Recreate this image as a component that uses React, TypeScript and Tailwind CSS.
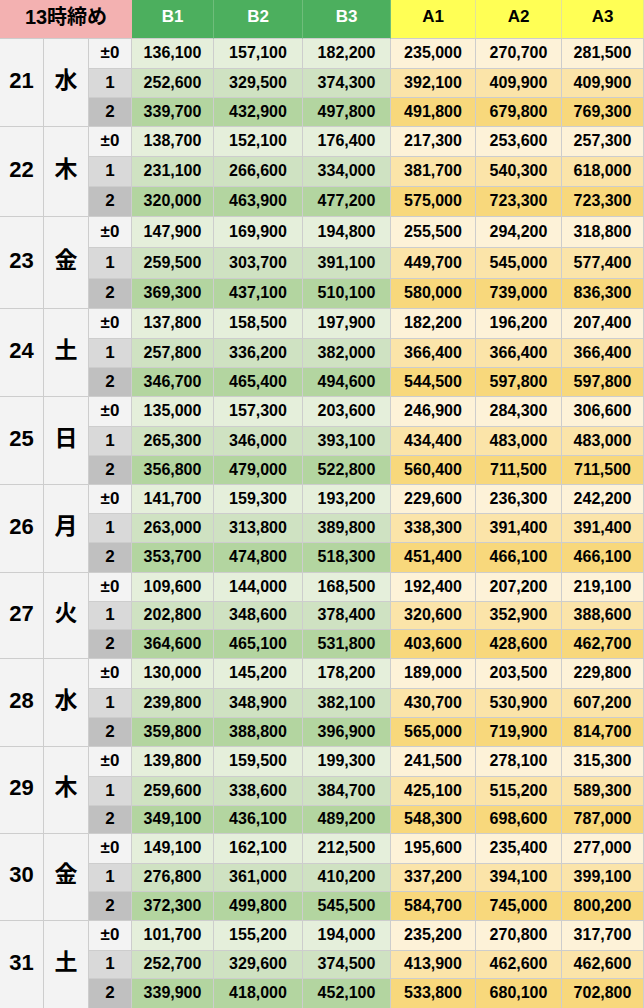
const days: { d: number; w: string; rows: string[][] }[] = [
  { d: 21, w: "水", rows: [
    ["136,100", "157,100", "182,200", "235,000", "270,700", "281,500"],
    ["252,600", "329,500", "374,300", "392,100", "409,900", "409,900"],
    ["339,700", "432,900", "497,800", "491,800", "679,800", "769,300"],
  ] },
  { d: 22, w: "木", rows: [
    ["138,700", "152,100", "176,400", "217,300", "253,600", "257,300"],
    ["231,100", "266,600", "334,000", "381,700", "540,300", "618,000"],
    ["320,000", "463,900", "477,200", "575,000", "723,300", "723,300"],
  ] },
  { d: 23, w: "金", rows: [
    ["147,900", "169,900", "194,800", "255,500", "294,200", "318,800"],
    ["259,500", "303,700", "391,100", "449,700", "545,000", "577,400"],
    ["369,300", "437,100", "510,100", "580,000", "739,000", "836,300"],
  ] },
  { d: 24, w: "土", rows: [
    ["137,800", "158,500", "197,900", "182,200", "196,200", "207,400"],
    ["257,800", "336,200", "382,000", "366,400", "366,400", "366,400"],
    ["346,700", "465,400", "494,600", "544,500", "597,800", "597,800"],
  ] },
  { d: 25, w: "日", rows: [
    ["135,000", "157,300", "203,600", "246,900", "284,300", "306,600"],
    ["265,300", "346,000", "393,100", "434,400", "483,000", "483,000"],
    ["356,800", "479,000", "522,800", "560,400", "711,500", "711,500"],
  ] },
  { d: 26, w: "月", rows: [
    ["141,700", "159,300", "193,200", "229,600", "236,300", "242,200"],
    ["263,000", "313,800", "389,800", "338,300", "391,400", "391,400"],
    ["353,700", "474,800", "518,300", "451,400", "466,100", "466,100"],
  ] },
  { d: 27, w: "火", rows: [
    ["109,600", "144,000", "168,500", "192,400", "207,200", "219,100"],
    ["202,800", "348,600", "378,400", "320,600", "352,900", "388,600"],
    ["364,600", "465,100", "531,800", "403,600", "428,600", "462,700"],
  ] },
  { d: 28, w: "水", rows: [
    ["130,000", "145,200", "178,200", "189,000", "203,500", "229,800"],
    ["239,800", "348,900", "382,100", "430,700", "530,900", "607,200"],
    ["359,800", "388,800", "396,900", "565,000", "719,900", "814,700"],
  ] },
  { d: 29, w: "木", rows: [
    ["139,800", "159,500", "199,300", "241,500", "278,100", "315,300"],
    ["259,600", "338,600", "384,700", "425,100", "515,200", "589,300"],
    ["349,100", "436,100", "489,200", "548,300", "698,600", "787,000"],
  ] },
  { d: 30, w: "金", rows: [
    ["149,100", "162,100", "212,500", "195,600", "235,400", "277,000"],
    ["276,800", "361,000", "410,200", "337,200", "394,100", "399,100"],
    ["372,300", "499,800", "545,500", "584,700", "745,000", "800,200"],
  ] },
  { d: 31, w: "土", rows: [
    ["101,700", "155,200", "194,000", "235,200", "270,800", "317,700"],
    ["252,700", "329,600", "374,500", "413,900", "462,600", "462,600"],
    ["339,900", "418,000", "452,100", "533,800", "680,100", "702,800"],
  ] },
]

const offsets = ["±0", "1", "2"]
const offsetBg = ["bg-[#f3f3f3]", "bg-[#d9d9d9]", "bg-[#c0c0c0]"]
const bBg = ["bg-[#e5efdb]", "bg-[#cfe2c2]", "bg-[#b3d5a0]"]
const aBg = ["bg-[#fdf2d8]", "bg-[#fbe4a9]", "bg-[#f8d87c]"]

const cell = "flex items-center justify-center border-r border-b border-[#cdcdcd]"

export default function App() {
  return (
    <div
      className="w-[644px] h-[1008px] overflow-hidden bg-white text-black font-bold"
      style={{ fontFamily: "'Liberation Sans', 'Noto Sans CJK JP', Arial, sans-serif" }}
    >
      <div className="grid grid-cols-[44px_45px_43px_82px_89px_88px_85px_86px_82px] grid-rows-[39px_30px_29px_29px_30px_30px_30px_31px_31px_30px_30px_29px_29px_30px_29px_29px_29px_29px_30px_29px_28px_29px_30px_29px_29px_30px_29px_28px_30px_28px_29px_30px_28px_30px]">
        {/* header */}
        <div className="col-span-3 flex items-center justify-center pb-[5px] border-b border-[#cdcdcd] bg-[#f3b1b1] text-[20px]">
          13時締め
        </div>
        {["B1", "B2", "B3"].map((h) => (
          <div key={h} className="flex items-center justify-center pb-[5px] border-r border-b border-r-[#6fbd7b] border-b-[#cdcdcd] bg-[#4caf5e] text-white text-[17px]">
            {h}
          </div>
        ))}
        {["A1", "A2", "A3"].map((h) => (
          <div key={h} className="flex items-center justify-center pb-[5px] border-r border-b border-r-[#e2e29a] border-b-[#cdcdcd] bg-[#ffff55] text-[17px]">
            {h}
          </div>
        ))}

        {/* body */}
        {days.map((day) => (
          <Day key={day.d} d={day.d} w={day.w} rows={day.rows} />
        ))}
      </div>
    </div>
  )
}

function Day({ d, w, rows }: { d: number; w: string; rows: string[][] }) {
  return (
    <>
      <div className={`${cell} row-span-3 pb-[5px] bg-[#f3f3f3] text-[22px]`}>{d}</div>
      <div className={`${cell} row-span-3 pb-[5px] bg-[#f3f3f3] text-[23px]`}>{w}</div>
      {rows.map((vals, i) => (
        <Row key={i} i={i} vals={vals} />
      ))}
    </>
  )
}

function Row({ i, vals }: { i: number; vals: string[] }) {
  return (
    <>
      <div className={`${cell} pb-px ${offsetBg[i]} text-[17px]`}>{offsets[i]}</div>
      {vals.map((v, j) => (
        <div key={j} className={`${cell} pb-px ${j < 3 ? bBg[i] : aBg[i]} text-[16px]`}>
          {v}
        </div>
      ))}
    </>
  )
}
